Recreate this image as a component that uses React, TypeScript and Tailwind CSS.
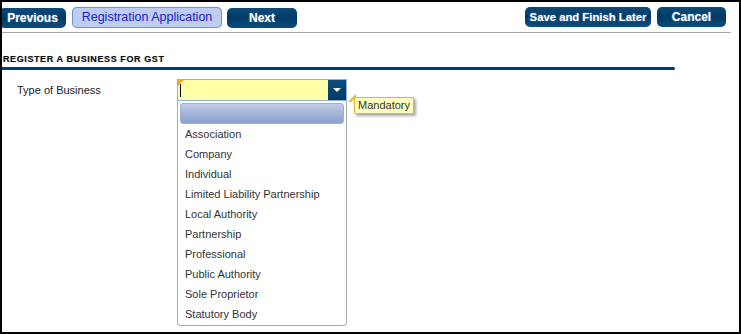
import React from "react";

const OPTIONS = [
  "Association",
  "Company",
  "Individual",
  "Limited Liability Partnership",
  "Local Authority",
  "Partnership",
  "Professional",
  "Public Authority",
  "Sole Proprietor",
  "Statutory Body",
];

function NavButton({ label, className }: { label: string; className: string }) {
  return (
    <button
      className={`h-[20px] rounded-[5px] bg-gradient-to-b from-[#0d4a78] via-[#003a66] to-[#0b4f80] font-bold text-white [text-shadow:0_0_2px_#6b8fb0] ${className}`}
    >
      {label}
    </button>
  );
}

export default function App() {
  return (
    <div className="h-[334px] w-[741px] bg-black p-[2px] font-['Liberation_Sans',Arial,sans-serif]">
      <div className="relative h-full w-full overflow-hidden bg-white">
        {/* Toolbar */}
        <div className="flex items-start justify-between pt-[5px]">
          <div className="flex items-start gap-[6px]">
            <NavButton label="Previous" className="mt-[1px] -ml-[3px] w-[67px] text-[12px]" />
            <button className="h-[21px] w-[150px] rounded-[5px] border border-[#7a92cc] bg-[#bccdf0] text-[12.5px] text-[#2222cc] shadow-[0_0_1px_#9fb3e0]">
              Registration Application
            </button>
            <NavButton label="Next" className="mt-[1px] -ml-[1px] w-[70px] text-[12px]" />
          </div>
          <div className="mr-[13px] flex items-start gap-[6px]">
            <NavButton label="Save and Finish Later" className="w-[126px] text-[11.3px]" />
            <NavButton label="Cancel" className="w-[69px] text-[12px]" />
          </div>
        </div>
        <div className="mr-[8px] mt-[4px] h-px bg-[#a8a8a8]" />

        {/* Section heading */}
        <div className="mt-[20px] pl-[1px] text-[9px] font-bold leading-[12px] tracking-[0.6px] text-[#111] [text-shadow:0_0_1px_#9a9a9a]">
          REGISTER A BUSINESS FOR GST
        </div>
        <div className="mt-[2px] h-[3px] w-[673px] rounded-r-full bg-[#003e6b]" />

        {/* Field row */}
        <div className="mt-[9px] flex items-start">
          <div className="w-[175px] pl-[15px] pt-[4px] text-[11px] leading-[14px] text-[#222]">
            Type of Business
          </div>
          <div className="flex h-[22px] w-[170px] border border-[#8db0dc] bg-[#ffffa8]">
            <div className="relative flex-1">
              <div className="absolute left-0 top-0 h-0 w-0 border-r-[6px] border-t-[6px] border-r-transparent border-t-[#f0b020]" />
              <div className="absolute left-[2px] top-[4px] h-[13px] w-px bg-black" />
            </div>
            <div className="flex w-[18px] items-center justify-center bg-gradient-to-b from-[#0e4c7c] to-[#023a66]">
              <div className="h-0 w-0 border-l-[4px] border-r-[4px] border-t-[4px] border-l-transparent border-r-transparent border-t-white" />
            </div>
          </div>
        </div>

        {/* Tooltip */}
        <div className="absolute left-[352px] top-[95px]">
          <div className="absolute -left-[6px] -top-[3px] h-0 w-0 border-b-[8px] border-l-[8px] border-b-[#e3b23c] border-l-transparent" />
          <div className="absolute -left-[4px] -top-[1px] h-0 w-0 border-b-[7px] border-l-[7px] border-b-[#ffffc0] border-l-transparent" />
          <div className="relative rounded-[1px] border border-[#e3b23c] bg-[#ffffc0] px-[3px] text-[11px] leading-[15px] text-[#333] shadow-[2px_2px_3px_rgba(0,0,0,0.35)]">
            Mandatory
          </div>
        </div>

        {/* Open dropdown list */}
        <div className="absolute left-[175px] top-[99px] w-[170px] rounded-b-[4px] border border-t-0 border-[#a9a9a9] bg-white px-[2px] pb-[1px] pt-[2px]">
          <div className="h-[21px] rounded-[3px] border border-[#9eb0d4] bg-gradient-to-b from-[#c2cde6] via-[#a3b4da] to-[#8aa1cf]" />
          {OPTIONS.map((opt) => (
            <div key={opt} className="h-[20px] pl-[5px] text-[11px] leading-[20px] text-[#333]">
              {opt}
            </div>
          ))}
        </div>
      </div>
    </div>
  );
}
